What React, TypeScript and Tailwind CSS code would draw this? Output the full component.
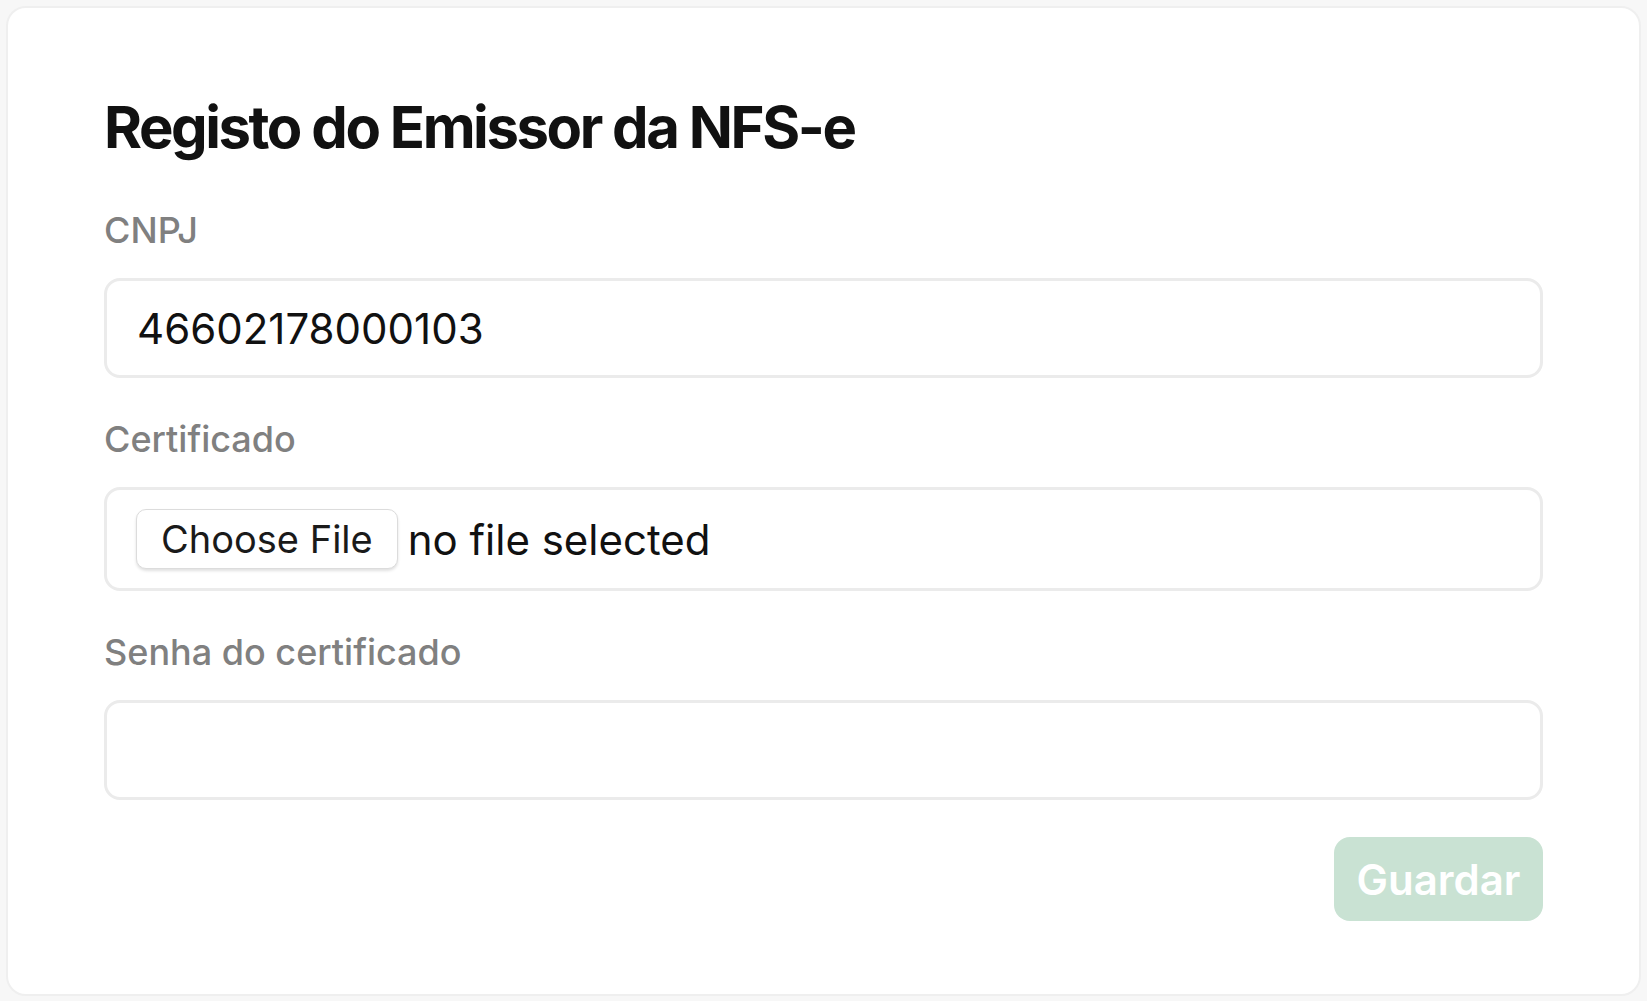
import React from "react";

export default function App() {
  return (
    <div
      className="min-h-screen bg-[#f7f7f7] p-[6px]"
      style={{ fontFamily: "Inter, 'Noto Sans', sans-serif" }}
    >
      <div className="rounded-[20px] border-2 border-[#efefef] bg-white px-[96px] pt-[84px] pb-[73px]">
        <h1 className="text-[58px] leading-[70px] font-bold tracking-[-0.042em] text-[#111111]">
          Registo do Emissor da NFS-e
        </h1>

        <div className="mt-[48px] flex flex-col gap-[41px]">
          <div className="flex flex-col">
            <label className="mb-[28px] text-[36px] leading-[40px] font-medium text-[#808080]">
              CNPJ
            </label>
            <input
              type="text"
              defaultValue="46602178000103"
              className="h-[100px] w-full rounded-[16px] border-[3px] border-[#ebebeb] bg-white px-[30px] text-[42px] text-[#111111] outline-none"
            />
          </div>

          <div className="flex flex-col">
            <label className="mb-[28px] text-[36px] leading-[40px] font-medium text-[#808080]">
              Certificado
            </label>
            <div className="flex h-[104px] w-full items-center rounded-[16px] border-[3px] border-[#ebebeb] bg-white pl-[29px]">
              <button
                type="button"
                className="flex h-[60px] items-center rounded-[10px] border border-[#dcdcdc] bg-white px-[24px] text-[38px] text-[#1a1a1a] shadow-[0_2px_3px_rgba(0,0,0,0.12)]"
              >
                Choose File
              </button>
              <span className="ml-[10px] text-[42px] text-[#111111]">
                no file selected
              </span>
            </div>
          </div>

          <div className="flex flex-col">
            <label className="mb-[28px] text-[36px] leading-[40px] font-medium text-[#808080]">
              Senha do certificado
            </label>
            <input
              type="password"
              className="h-[100px] w-full rounded-[16px] border-[3px] border-[#ebebeb] bg-white px-[30px] text-[42px] text-[#111111] outline-none"
            />
          </div>
        </div>

        <div className="mt-[37px] flex justify-end">
          <button
            type="button"
            className="flex h-[84px] w-[209px] items-center justify-center rounded-[16px] bg-[#c9e2d3] text-[42px] font-semibold text-white"
          >
            Guardar
          </button>
        </div>
      </div>
    </div>
  );
}
